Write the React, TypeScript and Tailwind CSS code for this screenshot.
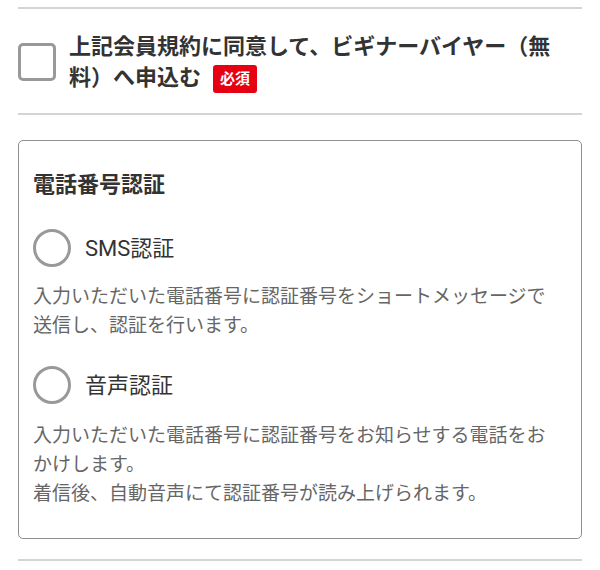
export default function App() {
  return (
    <div
      className="w-[600px] h-[570px] bg-white px-[18px] pt-[7px] text-[#333]"
      style={{ fontFamily: 'Roboto, "Noto Sans CJK JP", sans-serif' }}
    >
      <div className="border-t-2 border-[#d4d4d4]" />

      <label className="flex items-center gap-[13px] pt-[22px] pb-[20px]">
        <span className="shrink-0 w-[38px] h-[38px] rounded-[5px] border-[3px] border-[#999]" />
        <span className="text-[22px] leading-[31px] font-bold">
          上記会員規約に同意して、ビギナーバイヤー（無料）へ申込む
          <span className="inline-flex items-center justify-center align-middle ml-[12px] w-[44px] h-[28px] rounded-[3px] bg-[#e60012] text-white text-[15px] leading-none font-bold">
            必須
          </span>
        </span>
      </label>

      <div className="border-t-2 border-[#d4d4d4]" />

      <div className="mt-[25px] rounded-[5px] border-[1.5px] border-[#8f8f8f] pl-[14px] pr-[26px] pt-[28px] pb-[30px]">
        <h2 className="text-[22px] leading-[31px] font-bold">電話番号認証</h2>

        <div className="mt-[29px] flex items-center gap-[14px]">
          <span className="shrink-0 w-[38px] h-[38px] rounded-full border-[3px] border-[#999]" />
          <span className="text-[22px] leading-[31px]">SMS認証</span>
        </div>
        <p className="mt-[15px] text-[19px] leading-[29px] text-[#666]">
          入力いただいた電話番号に認証番号をショートメッセージで送信し、認証を行います。
        </p>

        <div className="mt-[26px] flex items-center gap-[14px]">
          <span className="shrink-0 w-[38px] h-[38px] rounded-full border-[3px] border-[#999]" />
          <span className="text-[22px] leading-[31px]">音声認証</span>
        </div>
        <p className="mt-[17px] text-[19px] leading-[29px] text-[#666]">
          入力いただいた電話番号に認証番号をお知らせする電話をおかけします。
          <br />
          着信後、自動音声にて認証番号が読み上げられます。
        </p>
      </div>

      <div className="mt-[20px] border-t-2 border-[#d4d4d4]" />
    </div>
  );
}
